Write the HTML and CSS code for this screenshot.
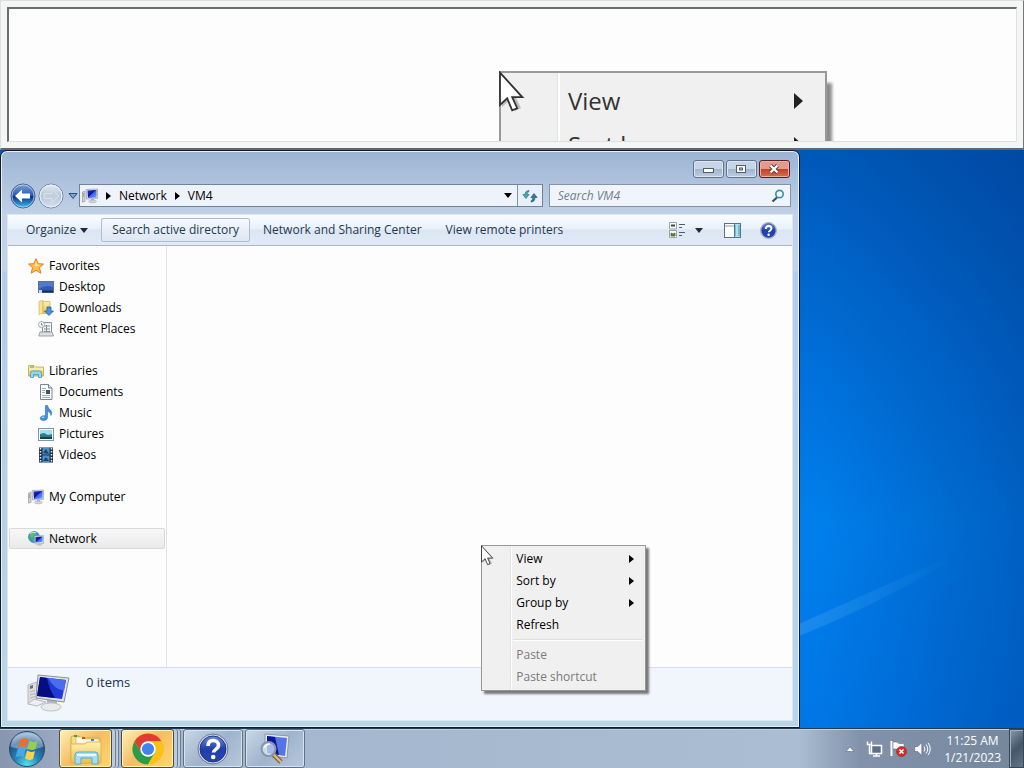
FILE: index.html
```html
<!DOCTYPE html>
<html lang="en">
<head>
  <meta charset="UTF-8" />
  <meta name="viewport" content="width=device-width, initial-scale=1.0"/>
  <title>VM4</title>
  <link rel="stylesheet" href="styles.css">
</head>
<body>
  <svg class="defs" width="0" height="0" aria-hidden="true">
    <defs>
      <linearGradient id="screen" x1="0" y1="0" x2="1" y2="1">
        <stop offset="0" stop-color="#2438b8"/><stop offset=".45" stop-color="#0a12a0"/><stop offset=".5" stop-color="#3a5cf0"/><stop offset="1" stop-color="#7fa6ff"/>
      </linearGradient>
      <linearGradient id="gold" x1="0" y1="0" x2="0" y2="1">
        <stop offset="0" stop-color="#fff3b0"/><stop offset="1" stop-color="#e9bf4f"/>
      </linearGradient>
      <linearGradient id="blueball" x1="0" y1="0" x2="0" y2="1">
        <stop offset="0" stop-color="#7fa3dc"/><stop offset=".48" stop-color="#2b57ae"/><stop offset=".52" stop-color="#0c2f88"/><stop offset="1" stop-color="#3cc3f5"/>
      </linearGradient>
      <linearGradient id="helpball" x1="0" y1="0" x2="0" y2="1">
        <stop offset="0" stop-color="#6d8de0"/><stop offset=".5" stop-color="#203fae"/><stop offset="1" stop-color="#2746a8"/>
      </linearGradient>
      <linearGradient id="paleball" x1="0" y1="0" x2="0" y2="1">
        <stop offset="0" stop-color="#e3ebf5"/><stop offset=".5" stop-color="#b8c6da"/><stop offset="1" stop-color="#d5e1ef"/>
      </linearGradient>
      <radialGradient id="orb" cx=".5" cy=".95" r=".9">
        <stop offset="0" stop-color="#58e0f2"/><stop offset=".4" stop-color="#2385b5"/><stop offset=".75" stop-color="#23558a"/><stop offset="1" stop-color="#8fb3d0"/>
      </radialGradient>
      <linearGradient id="beam">
        <stop offset="0" stop-color="#58b0f5" stop-opacity=".3"/><stop offset="1" stop-color="#58b0f5" stop-opacity="0"/>
      </linearGradient>
      <symbol id="pc" viewBox="0 0 16 16">
        <path d="M.5 4l2.500-.7v10l-2.500.8z" fill="#d3d6d9" stroke="#85898e" stroke-width=".6"/>
        <path d="M1 6h1M1 8h1" stroke="#777"/>
        <path d="M4 1.500l11.500-.5v9.500l-11 .5z" fill="#d9dde6" stroke="#8e93a5" stroke-width=".6"/>
        <path d="M5.500 2.500l9-.5v7.500l-8.500.5z" fill="url(#screen)"/>
        <path d="M9 11h3v2H9z" fill="#aeb2b8"/><ellipse cx="10.500" cy="13.500" rx="4" ry="1.400" fill="#d2d4d8" stroke="#999" stroke-width=".4"/>
      </symbol>
      <symbol id="qmark" viewBox="0 0 32 32">
        <circle cx="16" cy="16" r="15" fill="#d7dde9" stroke="#6a7594"/>
        <circle cx="16" cy="16" r="13" fill="url(#helpball)" stroke="#1b3285"/>
        <path d="M11 13c0-3.500 2-5.500 5.200-5.500 3 0 5.300 1.800 5.300 4.700 0 4.200-5 4-5 7.300" fill="none" stroke="#fff" stroke-width="3.600"/>
        <circle cx="16.200" cy="24" r="2.300" fill="#fff"/>
      </symbol>
      <symbol id="cursor" viewBox="0 0 13 21">
        <path d="M1.500 2v16l4-3.500 2.500 5.500 3-1.500-2.500-5h4.500z" fill="#000" opacity=".22"/>
        <path d="M.5.8v16.200l3.600-3.300 2.500 6 2.500-1.100-2.500-5.500h5z" fill="#fff" stroke="#333" stroke-width=".9"/>
      </symbol>
    </defs>
  </svg>

  <div class="magnifier">
    <div class="lens">
      <div class="big-menu" aria-hidden="true">
        <svg class="big-cursor"><use href="#cursor"/></svg>
        <div class="big-item"><span>View</span><i class="arrow-right"></i></div>
        <div class="big-item"><span>Sort by</span><i class="arrow-right"></i></div>
      </div>
    </div>
  </div>

  <main class="desktop">
    <svg class="streak" viewBox="0 0 224 578" preserveAspectRatio="none" aria-hidden="true">
      <path d="M0 474L155 404 145 414Q75 456 0 486z" fill="url(#beam)"/>
    </svg>
    <section class="window">
      <header class="titlebar">
        <button class="caption" aria-label="Minimize"><svg width="14" height="10" viewBox="0 0 14 10"><rect x="2.500" y="4.500" width="10" height="4" fill="#fff" stroke="#515e70"/></svg></button>
        <button class="caption" aria-label="Maximize"><svg width="14" height="10" viewBox="0 0 14 10"><rect x="2.500" y="1.500" width="9" height="7" fill="#fff" stroke="#515e70"/><rect x="5.500" y="4" width="3" height="2" fill="#b7c5d8" stroke="#515e70"/></svg></button>
        <button class="caption close" aria-label="Close"><svg width="14" height="10" viewBox="0 0 14 10"><path d="M3.500 1.500l7 7M10.500 1.500l-7 7" stroke="#5c3030" stroke-width="4"/><path d="M3.500 1.500l7 7M10.500 1.500l-7 7" stroke="#fff" stroke-width="2.400"/></svg></button>
      </header>

      <nav class="navbar" aria-label="Address bar">
        <div class="travel">
          <button aria-label="Back"><svg width="26" height="26" viewBox="0 0 26 26"><circle cx="13" cy="13" r="12" fill="url(#blueball)" stroke="#4c6486"/><circle cx="13" cy="13" r="11" fill="none" stroke="#c4dcf3" opacity=".7"/><path d="M5 13l7-6.500v4h8v5h-8v4z" fill="#fff"/></svg></button>
          <button aria-label="Forward"><svg width="26" height="26" viewBox="0 0 26 26"><circle cx="13" cy="13" r="12" fill="url(#paleball)" stroke="#7888a2"/><circle cx="13" cy="13" r="11" fill="none" stroke="#edf4fb"/><path d="M21 13l-7-6.500v4h-8v5h8v4z" fill="#c5d0df" stroke="#d8e2ee"/></svg></button>
          <button class="history" aria-label="Recent pages"><svg width="10" height="8" viewBox="0 0 10 8"><path d="M1 1.500h8l-4 5z" fill="#75a8d4" stroke="#294f7e"/></svg></button>
        </div>
        <div class="address">
          <svg width="16" height="16"><use href="#pc"/></svg>
          <i class="arrow-right"></i><a href="#">Network</a>
          <i class="arrow-right"></i><a href="#">VM4</a>
          <button class="previous" aria-label="Previous locations"><i class="arrow-down"></i></button>
          <button class="refresh" aria-label="Refresh"><svg width="16" height="16" viewBox="0 0 16 16"><path d="M7 2.500C4.500 2.500 3 4 3 6.500H.8l3.200 4 3.200-4H5.300C5.300 4.700 6 4 7 3.700z" fill="#48a2b5" stroke="#287184" stroke-width=".6"/><path d="M9 14c2.500 0 4-1.500 4-4.500h2.200L12 5.500l-3.200 4h1.900c0 1.900-.7 2.900-1.700 3.300z" fill="#39798c" stroke="#24566a" stroke-width=".6"/></svg></button>
        </div>
        <form class="search">
          <input type="search" placeholder="Search VM4" aria-label="Search VM4">
          <svg width="14" height="14" viewBox="0 0 14 14"><path d="M6 8.500l-4.500 4" stroke="#2f5260" stroke-width="2.200"/><circle cx="8.500" cy="5" r="3.700" fill="#f4fbff" stroke="#3f92a5" stroke-width="1.700"/></svg>
        </form>
      </nav>

      <div class="client">
        <div class="toolbar">
          <button>Organize <i class="arrow-down"></i></button>
          <button class="active">Search active directory</button>
          <button>Network and Sharing Center</button>
          <button>View remote printers</button>
          <div class="tools">
            <button aria-label="Change your view"><svg width="17" height="16" viewBox="0 0 17 16"><path d="M.5.500h7v6.500h-7zM.5 8.500h7v7h-7z" fill="#fff" stroke="#9aa3ac"/><path d="M2 3.500h4" stroke="#444" stroke-width="2"/><path d="M2 11l2 1 2-1v3H2z" fill="#5e8a3b" stroke="#48662c" stroke-width=".8"/><path d="M10 2.500h6M10 5.500h3M10 10.500h6M10 13.500h3" stroke="#4d5b6b"/></svg></button>
            <button aria-label="More options"><i class="arrow-down"></i></button>
            <button class="pane" aria-label="Preview pane"><svg width="17" height="15" viewBox="0 0 17 15"><rect x=".5" y=".5" width="16" height="14" fill="#fff" stroke="#5f7183"/><path d="M1 3h9" stroke="#8d9dac"/><path d="M10.500 1v13" stroke="#5f7183"/><rect x="11" y="1.500" width="5" height="12" fill="#6cc1d5"/><path d="M13 2v11" stroke="#b1e2ec" stroke-width="2"/></svg></button>
            <button class="help" aria-label="Get help"><svg width="17" height="17"><use href="#qmark"/></svg></button>
          </div>
        </div>

        <div class="body">
          <aside class="sidebar">
            <ul>
              <li><a href="#"><svg width="16" height="16" viewBox="0 0 16 16"><path d="M8 .7l2.200 5 5.300.4-4.100 3.600 1.500 5.500L8 12.300l-4.900 2.900 1.500-5.500L.5 6.100l5.300-.4z" fill="#ffc14d" stroke="#df7d20"/><path d="M8 3.500l1.200 3.300 3 .3-5 1.200z" fill="#fff1b4"/></svg>Favorites</a></li>
              <li><a class="sub" href="#"><svg width="16" height="16" viewBox="0 0 16 16"><rect x=".5" y="2.500" width="15" height="11" fill="#3159b7" stroke="#5a7494"/><path d="M1 3h14v5Q7 5 1 10z" fill="#5478cc"/><path d="M1 12.500h14" stroke="#1e2d52" stroke-width="2"/><path d="M1 11h3v3H1z" fill="#b4dce9"/></svg>Desktop</a></li>
              <li><a class="sub" href="#"><svg width="16" height="16" viewBox="0 0 16 16"><path d="M1 1.500l4-1V13l-4 1.500z" fill="#f8e49a" stroke="#ceb459" stroke-width=".7"/><path d="M5 1.500h7v12H5z" fill="url(#gold)" stroke="#cfb04e" stroke-width=".7"/><path d="M9 7h4v4h2.500L11 15.500 6.500 11H9z" fill="#4895df" stroke="#20619f" stroke-width=".8"/></svg>Downloads</a></li>
              <li><a class="sub" href="#"><svg width="16" height="16" viewBox="0 0 16 16"><path d="M4.500 1.500h9v11h-9z" fill="#f0f3f4" stroke="#8a959b"/><path d="M6 5h6M6 8h6M6 10.500h6M8.500 4v8" stroke="#86949b"/><path d="M2 11h12l1.500 4H.8z" fill="#d9dfe2" stroke="#87929a" stroke-width=".8"/><circle cx="3.500" cy="3.500" r="3" fill="#fff" stroke="#87929a" stroke-width=".8"/><path d="M3.500 2v2h1.500" stroke="#555" fill="none" stroke-width=".7"/></svg>Recent Places</a></li>
            </ul>
            <ul>
              <li><a href="#"><svg width="16" height="16" viewBox="0 0 16 16"><path d="M.5 13V2.500H6l1.500 1.500h8V13z" fill="url(#gold)" stroke="#c7a645" stroke-width=".8"/><path d="M2 4h4" stroke="#43a24b"/><path d="M1 6h14" stroke="#fff6c9"/><path d="M2.500 14.500V10q0-2 2-2h7q2 0 2 2v4.500h-3v-3h-5v3z" fill="#8dd9ed" stroke="#4899b5" stroke-width=".8"/></svg>Libraries</a></li>
              <li><a class="sub" href="#"><svg width="16" height="16" viewBox="0 0 16 16"><path d="M2.500.5h8l3.500 3.500v11.500H2.500z" fill="#fcfdfd" stroke="#78858d"/><path d="M10.500.5v3.500H14" fill="#dce4e8" stroke="#78858d"/><path d="M4 4.500h4M4 6.500h3M4 8.500h3M4 11.500h8M4 13.500h8" stroke="#a7b0b6"/><path d="M8 6h4v4H8z" fill="#3e5363"/></svg>Documents</a></li>
              <li><a class="sub" href="#"><svg width="16" height="16" viewBox="0 0 16 16"><path d="M7.500.500h2q.5 3 3 4.500 2 2 .5 5.500.3-3-3.500-4.300V12.500q0 2.500-3.500 3-4 0-3.800-2.400.6-2.800 5.300-2.400z" fill="#3f92de" stroke="#276bb4" stroke-width=".6"/><ellipse cx="5" cy="12.300" rx="1.500" ry=".8" fill="#a8d7fa"/></svg>Music</a></li>
              <li><a class="sub" href="#"><svg width="16" height="16" viewBox="0 0 16 16"><rect x=".5" y="2.500" width="15" height="12" fill="#fff" stroke="#8297a4"/><path d="M2 4h12v9H2z" fill="#a2def0"/><path d="M2 8l4-1 4 2 4-1v5H2z" fill="#2a7f86"/><path d="M2 11h12v2H2z" fill="#173f56"/></svg>Pictures</a></li>
              <li><a class="sub" href="#"><svg width="16" height="16" viewBox="0 0 16 16"><path d="M1 .5h14v15H1z" fill="#22313c"/><path d="M4.500 1h7v6.500h-7zM4.500 8.500h7V15h-7z" fill="#4c91cf"/><path d="M5 6l3-4 3 5zM5 14l3-4 3 4z" fill="#1e4569"/><path d="M2.500 1v14M13.500 1v14" stroke="#e5edf1" stroke-width="1.500" stroke-dasharray="1.500 1.500"/></svg>Videos</a></li>
            </ul>
            <ul>
              <li><a href="#"><svg width="16" height="16"><use href="#pc"/></svg>My Computer</a></li>
            </ul>
            <ul>
              <li><a class="selected" href="#"><svg width="16" height="16" viewBox="0 0 16 16"><circle cx="6" cy="6" r="5.500" fill="#3e9bc7" stroke="#28729b" stroke-width=".6"/><path d="M2 3q4-4 6-1L6 5 4 7 2 6zM5 8l3 1-2 2.400z" fill="#62bd5a"/><path d="M2 2.500Q5 0 8 2" stroke="#c0e9f5" fill="none"/><path d="M6.500 5l9-.5v8l-8.500.5z" fill="#e0e4ef" stroke="#8990a5" stroke-width=".5"/><path d="M7.500 6l7-.4V11l-7 .5z" fill="url(#screen)"/><path d="M9 14.500h5l-1-2h-3z" fill="#b8bdc5"/></svg>Network</a></li>
            </ul>
          </aside>
          <div class="files"></div>
        </div>

        <footer class="details">
          <svg width="46" height="40" viewBox="0 0 46 40">
            <path d="M2 12l9-3v19l-9 3z" fill="#dadcde" stroke="#b5b8ba"/><path d="M4 13l3-1v3l-3 1z" fill="#666c70"/><path d="M4 19l5-1.500M4 22l5-1.500M4 25l5-1.500" stroke="#b2b6b9"/>
            <path d="M8 26l12 3-9 4-9-2z" fill="#eceeef" stroke="#b6b9bc"/>
            <path d="M21 27h10v7H21z" fill="#b0b4b8"/><ellipse cx="25" cy="34" rx="10" ry="4" fill="#e9eaeb" stroke="#c0c3c6"/>
            <path d="M12 2l31 3-5 24-28-4z" fill="#dfe3e8" stroke="#8c9298"/>
            <path d="M14 4l26 3-4 19-25-3z" fill="#2139d7"/><path d="M14 4l7 1q2 11 8 20l-18-2z" fill="#070c80"/><path d="M22 5l18 2-2 11q-10-2-16-13z" fill="#4a6cee"/>
          </svg>
          <p>0 items</p>
        </footer>
      </div>
    </section>

    <div class="menu" role="menu">
      <svg class="pointer" width="13" height="21" aria-hidden="true"><use href="#cursor"/></svg>
      <button role="menuitem">View <i class="arrow-right"></i></button>
      <button role="menuitem">Sort by <i class="arrow-right"></i></button>
      <button role="menuitem">Group by <i class="arrow-right"></i></button>
      <button role="menuitem">Refresh</button>
      <hr>
      <button role="menuitem" disabled>Paste</button>
      <button role="menuitem" disabled>Paste shortcut</button>
    </div>
  </main>

  <footer class="taskbar">
    <button class="start" aria-label="Start">
      <svg width="38" height="38" viewBox="0 0 38 38"><circle cx="19" cy="19" r="17.500" fill="url(#orb)" stroke="#294b68"/><path d="M3 17Q4 3 19 3t16 14q-15 5-32 0z" fill="#d6e5ee" opacity=".42"/><path d="M12 10q4-3 8-.5l-2 8q-4-2.500-8 0z" fill="#ef6c2a"/><path d="M21.500 10.500q4 2.500 8 .5l-2 8q-4 2-8-.5z" fill="#95cf4b"/><path d="M9.500 19.500q4-2.500 8 0l-2 8q-4-2.500-8 0z" fill="#4ba6e8"/><path d="M19 20.500q4 2.500 8 .5l-2 8q-4 2-8-.5z" fill="#ffd04a"/></svg>
    </button>
    <button class="task lit stacked" aria-label="Windows Explorer">
      <svg width="34" height="32" viewBox="0 0 34 32"><path d="M2 30V5q0-2 2-2h6l2 2h19v25z" fill="#f9dd84" stroke="#cda848"/><path d="M7 8V4h7l2 2h14v5H7z" fill="#fff7dc" stroke="#d6b65d" stroke-width=".7"/><path d="M5 3h3" stroke="#3aa24c" stroke-width="2"/><path d="M13 5h3" stroke="#d44b3a" stroke-width="2"/><path d="M22 7h3" stroke="#3c83d0" stroke-width="2"/><path d="M2 11h14l2-2h14v21H2z" fill="url(#gold)" stroke="#dab75a"/><path d="M6 31V22q0-3 3-3h17q3 0 3 3v9h-6v-6H12v6z" fill="#a5def2" stroke="#5ba8c9"/><path d="M8 22h19" stroke="#e6faff" stroke-width="2"/></svg>
    </button>
    <button class="task lit stacked" aria-label="Google Chrome">
      <svg width="32" height="32" viewBox="0 0 32 32"><circle cx="16" cy="16" r="15.500" fill="#fbc116"/><path d="M2.600 8.200A15.500 15.500 0 0 1 29.400 8.200L16 8.500 9.300 19.900z" fill="#e33b2e"/><path d="M2.600 8.200A15.500 15.500 0 0 0 16 31.500l6.700-11.600H9.300z" fill="#2a9d4b"/><path d="M29.400 8.200H16v4l6.700 7.700L16 31.500A15.500 15.500 0 0 0 29.400 8.200z" fill="#fbc116"/><circle cx="16" cy="16" r="7.700" fill="#fff"/><circle cx="16" cy="16" r="6.100" fill="#4083ed"/></svg>
    </button>
    <button class="task" aria-label="Help and Support"><svg width="32" height="32"><use href="#qmark"/></svg></button>
    <button class="task" aria-label="Magnifier">
      <svg width="32" height="32" viewBox="0 0 32 32"><path d="M6 1l24 2-2 22-22-3z" fill="#e6e9ef" stroke="#8b97aa"/><path d="M8 3l20 2-2 18-18-3z" fill="#5475e8"/><path d="M8 3l8 1 4 18-12-2z" fill="#0b179b"/><path d="M14 21l8 8" stroke="#8b6a36" stroke-width="5"/><path d="M14 21l8 8" stroke="#d9bf84" stroke-width="2"/><circle cx="9.500" cy="16" r="7" fill="#cde4f7" fill-opacity=".8" stroke="#8795a8" stroke-width="2"/><path d="M5 15q2-4 6-4" stroke="#fff" fill="none" stroke-width="1.500"/></svg>
    </button>
    <div class="tray">
      <button aria-label="Show hidden icons"><svg width="10" height="6" viewBox="0 0 10 6"><path d="M1 5.500l4-4.500 4 4.500z" fill="#fff" stroke="#5b6a7c" stroke-width=".6"/></svg></button>
      <button aria-label="Network status"><svg width="17" height="16" viewBox="0 0 17 16"><path d="M5.500 4.500h10v8h-10z" fill="#5c6f85" stroke="#fff" stroke-width="1.500"/><path d="M7 15h7M10.500 12.500V15" stroke="#fff" stroke-width="1.500"/><path d="M1.500.5v3h4v-3M3.500 3.500v9H6" fill="none" stroke="#fff" stroke-width="1.400"/></svg></button>
      <button aria-label="Action Center"><svg width="17" height="17" viewBox="0 0 17 17"><path d="M1.500 1v15" stroke="#fff" stroke-width="2"/><path d="M3 2h4l2 1.500h5V10H8L6.500 9H3z" fill="#fff" stroke="#566578" stroke-width=".5"/><circle cx="11.500" cy="11.500" r="5" fill="#d92d2a" stroke="#a51f1d" stroke-width=".6"/><path d="M9.500 9.500l4 4M13.500 9.500l-4 4" stroke="#fff" stroke-width="1.600"/></svg></button>
      <button aria-label="Volume"><svg width="17" height="16" viewBox="0 0 17 16"><path d="M.8 5.500h3l4-4v13l-4-4h-3z" fill="#fff" stroke="#556477" stroke-width=".6"/><path d="M10 5.500q2 2.500 0 5M12 3.500q3.500 4.500 0 9M14 1.800q4.500 6.200 0 12.400" fill="none" stroke="#fff"/></svg></button>
      <time class="clock" datetime="2023-01-21T11:25">11:25 AM<br>1/21/2023</time>
    </div>
    <button class="peek" aria-label="Show desktop"></button>
  </footer>
</body>
</html>
```
FILE: styles.css
```css
* {
  box-sizing: border-box;
}
body {
  display: flex;
  flex-direction: column;
  height: 100vh;
  margin: 0;
  overflow: hidden;
  color: #000;
  font-family: "Open Sans", "Noto Sans", sans-serif;
  font-size: 12px;
  line-height: 16px;
}
button, input {
  font: inherit;
  color: inherit;
  padding: 0;
  border: none;
  background: none;
}
button {
  display: flex;
  align-items: center;
  justify-content: center;
}
a {
  color: inherit;
  text-decoration: none;
}
svg {
  flex: none;
}
.defs {
  position: absolute;
}
.arrow-right {
  border: 4px solid transparent;
  border-left: 5px solid #000;
  border-right: none;
}
.arrow-down {
  border: 4px solid transparent;
  border-top: 5px solid #1c2b3d;
  border-bottom: none;
}

/* magnifier */
.magnifier {
  flex: none;
  height: 150px;
  padding: 6px;
  background: #f4f6f6;
  border: 1px solid #dcdedf;
  border-right-color: #777;
  border-bottom: 2px solid #626769;
}
.lens {
  position: relative;
  height: 100%;
  overflow: hidden;
  background: #fdfdfd;
  border: 1px solid #dfe1e1;
  border-top: 2px solid #696d6e;
  border-left: 2px solid #696d6e;
}
.big-menu {
  position: absolute;
  top: 62px;
  left: 490px;
  width: 328px;
  height: 292px;
  padding: 6px 0;
  background: linear-gradient(90deg, #f0f0f0 56px, #e2e3e3 56px, #e2e3e3 57px, #fff 57px, #fff 59px, #f0f0f0 59px);
  border: 2px solid #999;
  box-shadow: 5px 12px 3px #8c8c8c;
}
.big-item {
  display: flex;
  align-items: center;
  justify-content: space-between;
  height: 44px;
  padding: 0 22px 0 67px;
  color: #333;
  font-size: 24px;
}
.big-item .arrow-right {
  border-width: 8px;
  border-left: 9px solid #222;
  border-right: none;
}
.big-cursor {
  position: absolute;
  top: -2px;
  left: -2px;
  width: 26px;
  height: 42px;
}

/* desktop */
.desktop {
  position: relative;
  display: flex;
  flex: 1;
  min-height: 0;
  background: linear-gradient(90deg, transparent 80%, rgba(0, 50, 130, 0.4)), linear-gradient(#0058b8, #0070da 38%, #007fec 65%, #0076e6);
}
.streak {
  position: absolute;
  right: 0;
  width: 22%;
  height: 100%;
}
.window {
  position: relative;
  display: flex;
  flex-direction: column;
  width: 78.1%;
  padding: 0 6px 6px;
  background: linear-gradient(#9cb5d4, #c1d1e6 64px, #c3d3e8 120px, #b4cde8 121px, #b9d6e8);
  border: 1px solid #111c28;
  border-radius: 7px 7px 0 0;
  box-shadow: inset 0 0 0 1px #e6f1fa;
}
.titlebar {
  display: flex;
  flex: none;
  gap: 2px;
  justify-content: flex-end;
  height: 31px;
  padding: 9px 3px 4px;
}
.caption {
  width: 31px;
  background: linear-gradient(#c7d5e6 48%, #9fb4ce 50%, #bdcde1);
  border: 1px solid #61738c;
  border-radius: 3px;
  box-shadow: inset 0 0 0 1px #dce7f3;
}
.close {
  background: linear-gradient(#e19b8d 48%, #c23f29 50%, #d86d50);
  border-color: #571d27;
  box-shadow: inset 0 0 0 1px #edb1a2;
}
.navbar {
  display: flex;
  flex: none;
  height: 32px;
  padding: 2px 2px 7px;
}
.travel {
  display: flex;
  align-items: center;
  gap: 2px;
  margin-left: 1px;
}
.history {
  width: 13px;
}
.address {
  display: flex;
  flex: 1;
  align-items: center;
  gap: 8px;
  margin-right: 6px;
  padding-left: 2px;
  background: #eef3fa;
  border: 1px solid #71839a;
}
.previous {
  margin-left: auto;
}
.previous .arrow-down {
  border-top-color: #000;
}
.refresh {
  align-self: stretch;
  width: 25px;
  background: #e9f0f9;
  border-left: 1px solid #8293a8;
}
.address .refresh {
  margin-left: -3px;
}
.search {
  display: flex;
  align-items: center;
  width: 242px;
  padding: 0 5px 0 8px;
  background: #f0f5fc;
  border: 1px solid #8394aa;
}
.search input {
  flex: 1;
  min-width: 0;
  outline: none;
}
.search input::placeholder {
  color: #757d87;
  font-style: italic;
}
.client {
  display: flex;
  flex: 1;
  flex-direction: column;
  min-height: 0;
  border: 1px solid #dce7f3;
}
.toolbar {
  display: flex;
  flex: none;
  align-items: center;
  gap: 2px;
  height: 31px;
  padding: 0 15px 0 7px;
  color: #26384f;
  background: linear-gradient(#fafdff, #e9f1fa 45%, #dce6f3 50%, #e1eaf6);
  border-bottom: 1px solid #a8b8cc;
}
.toolbar > button {
  gap: 4px;
  height: 24px;
  padding: 0 10px;
  border: 1px solid transparent;
  white-space: nowrap;
}
.toolbar > .active {
  background: linear-gradient(#f6fafe, #e8eff8 50%, #dde7f3);
  border-color: #afbdce;
  border-radius: 2px;
}
.tools {
  display: flex;
  align-items: center;
  gap: 9px;
  margin-left: auto;
}
.tools .pane {
  margin-left: 12px;
}
.tools .help {
  margin-left: 10px;
}
.body {
  display: flex;
  flex: 1;
  min-height: 0;
  background: #fdfdfd;
}
.sidebar {
  display: flex;
  flex-direction: column;
  gap: 21px;
  width: 159px;
  padding: 9px 1px;
  border-right: 1px solid #dce5ee;
}
.sidebar ul {
  margin: 0;
  padding: 0;
  list-style: none;
}
.sidebar a {
  display: flex;
  align-items: center;
  gap: 5px;
  height: 21px;
  padding-left: 18px;
  border: 1px solid transparent;
}
.sidebar .sub {
  padding-left: 28px;
}
.sidebar .selected {
  background: linear-gradient(#f8f8f8, #e9e9e9);
  border-color: #d9d9d9;
  border-radius: 2px;
}
.details {
  display: flex;
  flex: none;
  gap: 14px;
  height: 53px;
  padding: 5px 18px;
  color: #1e3250;
  background: #f1f5fc;
  border-top: 1px solid #d3dce8;
}
.details p {
  margin: 1px 0;
  font-size: 13px;
}

/* context menu */
.menu {
  position: absolute;
  top: 395px;
  left: 47%;
  width: 165px;
  padding: 2px;
  background: linear-gradient(90deg, #f0f0f0 28px, #e2e3e3 28px, #e2e3e3 29px, #fff 29px, #fff 30px, #f0f0f0 30px);
  border: 1px solid #979797;
  box-shadow: 3px 3px 2px #77797b;
}
.menu button {
  justify-content: space-between;
  width: 100%;
  height: 22px;
  padding: 0 9px 0 32px;
}
.menu button:disabled {
  color: #7a7a7a;
}
.menu hr {
  height: 2px;
  margin: 3px 0 3px 29px;
  background: #fff;
  border: none;
  border-top: 1px solid #dedfdf;
}
.pointer {
  position: absolute;
  top: -1px;
  left: -1px;
}

/* taskbar */
.taskbar {
  display: flex;
  flex: none;
  height: 40px;
  background: linear-gradient(90deg, #8795ae, #a8b9cf 10%, #a4b7ce 30%, #aabdd2 78%, #8192aa 84%, #75879d);
  border-top: 1px solid #1f3d55;
  box-shadow: inset 0 1px #c1d1df;
}
.start {
  width: 54px;
}
.task {
  width: 60px;
  margin: 0 1px;
  background: linear-gradient(135deg, #cad8e8, #9fb3cc 50%, #b6c8dc);
  border: 1px solid #5e7087;
  border-radius: 3px;
  box-shadow: inset 0 0 0 1px #d7e3ee;
}
.start + .task {
  margin-left: 5px;
}
.stacked {
  width: 53px;
  margin-right: 8px;
}
.lit {
  background: linear-gradient(135deg, #fff0b8, #f5bd62 48%, #ffd76a);
  border-color: #514a3f;
  box-shadow: inset 0 0 0 1px #fff2bd, 3px 0 #bacbdd, 4px 0 #6b7e94, 6px 0 #bacbdd, 7px 0 #6b7e94;
}
.tray {
  display: flex;
  align-items: center;
  gap: 7px;
  margin-left: auto;
  color: #fff;
}
.tray button:first-child {
  margin-right: 4px;
}
.clock {
  margin: 0 8px 0 6px;
  text-align: center;
  line-height: 17px;
}
.peek {
  width: 15px;
  background: linear-gradient(135deg, #8b99aa, #46566b 50%, #657487);
  border: 1px solid #35465a;
  box-shadow: inset 1px 1px #a2afbd;
}
```
